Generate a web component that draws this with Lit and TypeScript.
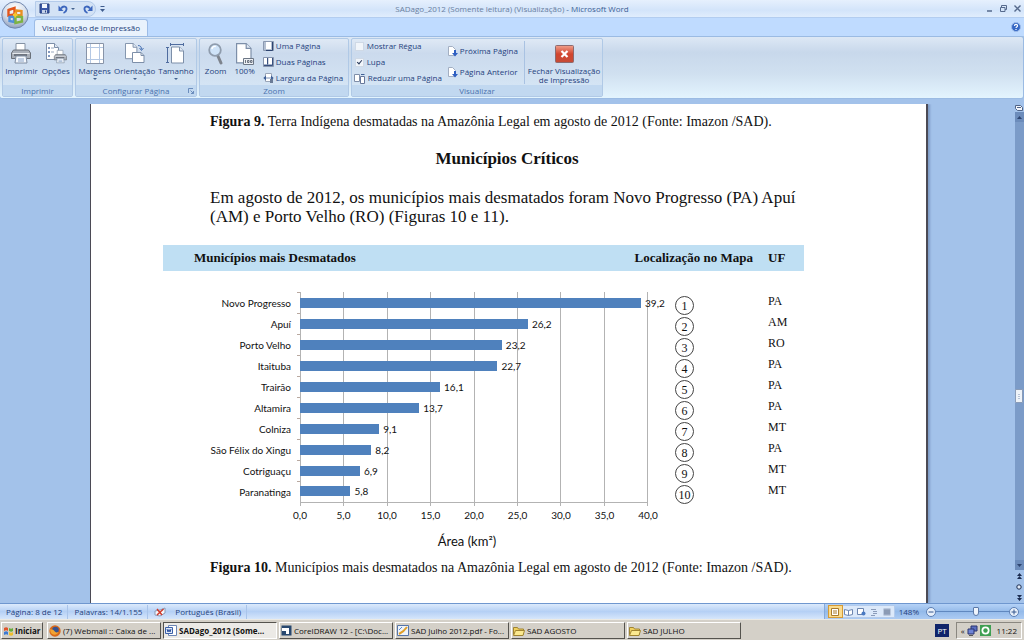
import { LitElement, html, css, svg, unsafeCSS } from "lit";
import { customElement } from "lit/decorators.js";

interface Municipio {
  nome: string;
  area: number;
  uf: string;
}

const MUNICIPIOS: Municipio[] = [
  { nome: "Novo Progresso", area: 39.2, uf: "PA" },
  { nome: "Apuí", area: 26.2, uf: "AM" },
  { nome: "Porto Velho", area: 23.2, uf: "RO" },
  { nome: "Itaituba", area: 22.7, uf: "PA" },
  { nome: "Trairão", area: 16.1, uf: "PA" },
  { nome: "Altamira", area: 13.7, uf: "PA" },
  { nome: "Colniza", area: 9.1, uf: "MT" },
  { nome: "São Félix do Xingu", area: 8.2, uf: "PA" },
  { nome: "Cotriguaçu", area: 6.9, uf: "MT" },
  { nome: "Paranatinga", area: 5.8, uf: "MT" },
];
const AXIS_MAX = 40;
const TICKS = [0, 5, 10, 15, 20, 25, 30, 35, 40];
const decimal = (n: number) => n.toFixed(1).replace(".", ",");

// One vertical hairline per tick of the horizontal axis.
const GRID = unsafeCSS(
  TICKS.map((t) => `linear-gradient(#b3b3b3, #b3b3b3) no-repeat ${(t / AXIS_MAX) * 100}% 0 / 1px 100%`).join(", ")
);

const icon = (w: number, h: number, body: unknown, box = `0 0 ${w} ${h}`) =>
  html`<svg width=${w} height=${h} viewBox=${box} aria-hidden="true">${body}</svg>`;

const sheet = svg`<path d="M.5.5h8l4 4v12h-12z" fill="#fff" stroke="#7d8fa9"/><path d="M8.500.5v4h4" fill="#dfe8f4" stroke="#7d8fa9"/>`;
const printer = svg`
  <path d="M5 8V.5h9V8" fill="#fff" stroke="#8592a4"/>
  <path d="M2.500 7h15l2 3v5.500h-19V10z" fill="#a9afb8" stroke="#6a7079"/>
  <path d="M1.500 10.500h17" stroke="#e6e9ed"/>
  <path d="M3 12h13" stroke="#5b616b" stroke-width="1.500"/>
  <path d="M5 13h10l1 7H4z" fill="#f4f8fd" stroke="#7f8da1"/>
  <path d="M7 16h6M7 18h6" stroke="#8aa3c7"/>`;

const I = {
  office: icon(28, 28, svg`
    <defs>
      <radialGradient id="orb" cx=".5" cy=".25" r=".8"><stop offset="0" stop-color="#fff"/><stop offset=".6" stop-color="#cfd8e6"/><stop offset="1" stop-color="#8494b4"/></radialGradient>
    </defs>
    <circle cx="14" cy="14" r="13.200" fill="url(#orb)" stroke="#7187ae"/>
    <g fill="none" stroke-width="2.400">
      <path d="M7.500 9l6-2v6.500l-6 1z" stroke="#e2551b"/>
      <path d="M15 9.500l5.500.5v4.500l-5.500-.5z" stroke="#e88f22"/>
      <path d="M8.500 16l4.500-.5v5.500l-4.500-1z" stroke="#4f8fd9"/>
      <path d="M14.500 15.500l6.500.5v4.500l-6.500 1.500z" stroke="#7db343"/>
    </g>
    <path d="M12 14h4.500M14.200 11.500v5" stroke="#f6c52f" stroke-width="2"/>`),
  save: icon(11, 11, svg`<path d="M1 1h9v9H1z" fill="#3b58a7" stroke="#27407f"/><path d="M3 1h5v4H3z" fill="#f3f7fd"/><path d="M3 7h5v3H3z" fill="#c4d1e8"/><path d="M6.500 7.500v2" stroke="#27407f"/>`),
  undo: icon(10, 10, svg`<path d="M3 4.500C5 1.500 9 2 8.500 5.500 8.200 7.500 7 8.500 5.500 9" fill="none" stroke="#3c66bd" stroke-width="1.800"/><path d="M.5 1.500V7H5.500z" fill="#3c66bd"/>`),
  redo: icon(10, 10, svg`<path d="M7 4.500C5 1.500 1 2 1.500 5.500 1.800 7.500 3 8.500 4.500 9" fill="none" stroke="#3c66bd" stroke-width="1.800"/><path d="M9.500 1.500V7H4.500z" fill="#3c66bd"/>`),
  caret: icon(4, 2, svg`<path d="M0 0h4L2 2z" fill="#44628f"/>`),
  qatMore: icon(5, 6, svg`<path d="M.5.5h4" stroke="#3f5c8d"/><path d="M0 3h5L2.500 6z" fill="#3f5c8d"/>`),
  help: icon(10, 10, svg`<circle cx="5" cy="5" r="4.500" fill="#3567c4" stroke="#9dbbe8"/><path d="M3.500 4c0-2 3-2 3-.3C6.500 5 5 4.800 5 6M5 7v1" fill="none" stroke="#fff" stroke-width="1.200"/>`),
  print: icon(20, 21, printer),
  options: icon(22, 21, svg`<g transform="translate(1)">${sheet}</g><path d="M3 5h2M3 9h2M3 13h2" stroke="#5a78ad" stroke-width="1.600"/><path d="M6 5h3M6 9h3" stroke="#9aa9bf"/><g transform="translate(9 7) scale(.64)">${printer}</g>`),
  margins: icon(18, 21, svg`<path d="M.5.500h17v20H.5z" fill="#fff" stroke="#8894a8"/><path d="M4.500 1v19M13.500 1v19M1 4.500h16M1 16.500h16" stroke="#b4c8e4"/>`),
  orientation: icon(20, 21, svg`<g transform="scale(.95)">${sheet}</g><path d="M7.500 9.500h8.500l3 3v7H7.500z" fill="#fff" stroke="#7d8fa9"/><path d="M16 9.500v3h3" fill="none" stroke="#7d8fa9"/><path d="M13 2.500c3 0 3.500 2 3.500 4M14.500 5l2 2.500 2-2.500" fill="none" stroke="#4b74b5"/>`),
  size: icon(19, 21, svg`<path d="M4 1.500h14M4.500 0v3M17.500 0v3M1.500 4v16M0 4.500h3M0 19.500h3" stroke="#4f6c9f"/><g transform="translate(5 3.500)">${sheet}</g>`),
  zoom: icon(16, 22, svg`<path d="M9.500 12l3.500 8" stroke="#7d838c" stroke-width="3" stroke-linecap="round"/><circle cx="7" cy="7" r="5.800" fill="#cfe3f8" stroke="#8f9cad" stroke-width="1.800"/><path d="M3.800 6a3.500 3.500 0 0 1 4-2.500" stroke="#fff" stroke-width="1.400" fill="none"/>`),
  hundred: icon(19, 22, svg`<g transform="translate(1) scale(1.200)">${sheet}</g><path d="M8.500 15.500h10v6h-10z" fill="#eef1f5" stroke="#6c7685"/><path d="M10.500 17v3M12.500 17.500h1.500v2h-1.500zM15.500 17.500h1.500v2h-1.500z" stroke="#4d5665" stroke-width=".8" fill="none"/>`),
  onePage: icon(11, 10, svg`<path d="M.5.500h10v9H.5z" fill="#b4c0d2" stroke="#8a98b0"/><path d="M3 1h5v7H3z" fill="#fff"/><path d="M9.500 1v8.500H3" fill="none" stroke="#2d4470"/>`),
  twoPages: icon(11, 10, svg`<path d="M.5.500h10v9H.5z" fill="#a4b1c7" stroke="#8795ae"/><path d="M1 1h3.500v6H1zM5.500 1H9v6H5.500z" fill="#fff"/><path d="M4.500 1v6.500M9.500 1v7.500H1" fill="none" stroke="#3a5180"/>`),
  pageWidth: icon(11, 10, svg`<path d="M2.500.500h6v8h-6z" fill="#fff" stroke="#9aa6b8"/><path d="M3 2.500L.3 5 3 7.500zM8 2.500L10.700 5 8 7.500z" fill="#3f5f95"/><path d="M3 5h5" stroke="#7b91b8"/><path d="M7 6h3v4H7z" fill="#6a7b96"/>`),
  shrink: icon(12, 11, svg`<path d="M.5 1.500h5v7h-5z" fill="#fff" stroke="#7f8ea9"/><path d="M6.500 3.500h4v7h-4z" fill="#fff" stroke="#66779a"/><path d="M7 1.500h3.500" stroke="#3f5f95"/>`),
  next: icon(10, 11, svg`<path d="M.5.500h4l3 3v6h-7z" fill="#fff" stroke="#a3afc2"/><path d="M6 4h2v3h2L7 10.500 4 7h2z" fill="#2f5fc2"/>`),
  close: icon(19, 18, svg`<defs><linearGradient id="red" x2="0" y2="1"><stop offset="0" stop-color="#f0a08c"/><stop offset=".5" stop-color="#d2452e"/><stop offset="1" stop-color="#c64c37"/></linearGradient></defs><rect x=".5" y=".5" width="18" height="17" rx="1" fill="url(#red)" stroke="#8d6a6e"/><path d="M6.500 6l6 6M12.500 6l-6 6" stroke="#fff" stroke-width="2.200"/>`),
  launcher: icon(6, 6, svg`<path d="M.5 5V.5H5" fill="none" stroke="#6b8dbd"/><path d="M2.500 2.500l3 3M5.500 3v2.500H3" stroke="#6b8dbd" fill="none"/>`),
  spell: icon(12, 10, svg`<path d="M1 4l5-1 5-2v5l-5 3-5-1z" fill="#f5f8fd" stroke="#8a9ab5"/><path d="M3 2l5 6M9.500 2L3 8" stroke="#d03a2b" stroke-width="1.500"/>`),
  flag: icon(11, 11, svg`<path d="M1 3c1.500-1 3-1 4 0v3C4 5 2.500 5 1 6z" fill="#e0532a"/><path d="M6 3c1.500 1 3 1 4 0v3C9 7 7.500 7 6 6z" fill="#66ac3a"/><path d="M1 7c1.500-1 3-1 4 0v3C4 9 2.500 9 1 10z" fill="#3c7ad2"/><path d="M6 7c1.500 1 3 1 4 0v3c-1 1-2.500 1-4 0z" fill="#efbf2d"/>`),
  firefox: icon(12, 12, svg`<circle cx="6" cy="6" r="5.700" fill="#d9691a"/><circle cx="6.500" cy="5" r="3.300" fill="#38538f"/><path d="M1 4c1 1 3 0 4 1.500S7 8 9.500 7C8 10.500 3 10.500 1.500 7z" fill="#f2a332"/>`),
  word: icon(12, 11, svg`<path d="M3.500.500h8v10h-8z" fill="#fff" stroke="#6d86b5"/><path d="M.5 2.500h7v6h-7z" fill="#dfe9f8" stroke="#3c60a8"/><path d="M2 4l1 3 1-2.500L5 7l1-3" fill="none" stroke="#2b4f9c"/>`),
  corel: icon(11, 11, svg`<path d="M.5.500h10v10H.5z" fill="#28486f"/><path d="M1 3h7v6H5V6H1z" fill="#fff"/>`),
  pdf: icon(12, 11, svg`<path d="M.5.500h11v10H.5z" fill="#eef4fb" stroke="#5675a8"/><path d="M2 9c2-1 6-4 8-7" stroke="#e0a02b" stroke-width="2" fill="none"/><path d="M2 5l3-3" stroke="#5b8bd0"/>`),
  folder: icon(12, 10, svg`<path d="M.5 8.500v-7h4l1 1.500h5v5.500z" fill="#f0d060" stroke="#a08430"/><path d="M.5 9.500L2.500 4.500h9l-1.500 5z" fill="#fbe98f" stroke="#a08430"/>`),
  net: icon(11, 11, svg`<path d="M4 1h6v5H4z" fill="#5b6fc0" stroke="#2b3570"/><path d="M1 4h6v5H1z" fill="#6f84d6" stroke="#2b3570"/><path d="M2 10.500h4" stroke="#555"/>`),
  shield: icon(11, 11, svg`<path d="M0 0h11v11H0z" fill="#3f9f52"/><circle cx="5.500" cy="5.500" r="4" fill="#fff"/><circle cx="5.500" cy="5.500" r="2.200" fill="#3f9f52"/>`),
};

@customElement("app-root")
export class AppRoot extends LitElement {
  static styles = css`
    :host {
      display: flex;
      flex-direction: column;
      height: 100vh;
      min-height: 640px;
      overflow: hidden;
      font-family: "Open Sans", "Noto Sans", sans-serif;
      font-size: 8px;
      line-height: 10px;
      color: #1f3f7d;
      background: #a3c2ea;
    }
    * { box-sizing: border-box; }
    svg { display: block; flex: none; }
    button {
      font: inherit;
      color: inherit;
      background: none;
      border: 0;
      padding: 0;
      margin: 0;
      display: flex;
      align-items: center;
      white-space: nowrap;
    }

    .top { position: relative; flex: none; }
    .orb { position: absolute; left: 1px; top: 1px; }
    .title {
      display: grid;
      grid-template-columns: 1fr auto 1fr;
      align-items: center;
      height: 18px;
      padding-left: 35px;
      padding-right: 3px;
      background: linear-gradient(#e6f0fd, #d3e4fa 60%, #e0edfd);
      border-bottom: 1px solid #b3cdf0;
    }
    .quick { display: flex; align-items: center; margin-right: 32px; }
    .qat {
      display: flex;
      align-items: center;
      gap: 8px;
      width: 61px;
      height: 16px;
      padding-left: 3px;
      border: 1px solid #b4cbea;
      border-radius: 0 8px 8px 0;
      background: #d3e2f5;
    }
    .qat .undo { gap: 3px; }
    .more { margin-left: 4px; }
    .caption { color: #3d5f95; padding-right: 32px; }
    .caption .doc { color: #6a7f9f; }
    .win { display: flex; gap: 7px; justify-content: flex-end; }

    .tabs {
      display: flex;
      align-items: flex-end;
      justify-content: space-between;
      height: 18px;
      padding: 0 3px 0 34px;
      background: #bfdbff;
    }
    .tab {
      height: 17px;
      padding: 0 7px;
      background: #e9f2fc;
      border: 1px solid #9dbce6;
      border-bottom: 0;
      border-radius: 3px 3px 0 0;
    }
    .help { padding-bottom: 4px; }

    .ribbon {
      display: flex;
      gap: 2px;
      height: 63px;
      padding: 1px 2px;
      border: 1px solid #9bbbe3;
      border-left: 0;
      border-radius: 3px;
      background: linear-gradient(#dde8f5, #c8d8eb 25%, #d0e0f0 60%, #e3f4fe);
    }
    .group {
      display: flex;
      flex-direction: column;
      border: 1px solid #b0c9e6;
      border-radius: 2px;
      background: linear-gradient(#dfe9f5, #cbdaed 25%, #d3e3f3 75%, #d8e8f8);
    }
    .print { width: 71px; }
    .setup { width: 122px; }
    .zoomg { width: 150px; }
    .view { width: 252px; }
    .body { flex: 1; min-height: 0; display: flex; justify-content: center; gap: 4px; padding-top: 2px; }
    .setup .body { gap: 3px; }
    .name {
      flex: none;
      display: flex;
      align-items: center;
      justify-content: center;
      height: 11px;
      color: #4a72ae;
      background: #c1d8f0;
    }
    .setup .name { display: grid; grid-template-columns: 1fr auto 1fr; }
    .setup .name svg { justify-self: end; margin-right: 2px; }
    .setup .name span { grid-column: 2; }
    .big { flex-direction: column; justify-content: flex-start; text-align: center; }
    .big .arrow { margin-top: 2px; }
    .art { height: 25px; display: flex; align-items: center; }
    .zoomg .body { gap: 8px; }
    .stack { display: flex; flex-direction: column; gap: 6px; }
    .stack button, .stack label { display: flex; align-items: center; gap: 2px; height: 10px; white-space: nowrap; }
    .stack.pages { gap: 11px; padding-top: 5px; }
    .view .body { gap: 6px; }
    .closer { padding-left: 3px; border-left: 1px solid #a9c2e2; height: 43px; }
    .closer .art { height: 25px; }
    .closer .lines { line-height: 9px; }
    input[type="checkbox"] {
      appearance: none;
      position: relative;
      width: 9px;
      height: 9px;
      margin: 0 1px;
      border: 1px solid #cfd9e6;
      background: #f1f5fa;
    }
    input[type="checkbox"]:checked::after {
      content: "";
      position: absolute;
      left: 2px;
      top: 0;
      width: 2px;
      height: 4px;
      border: solid #2b3b5c;
      border-width: 0 1px 1px 0;
      transform: rotate(40deg);
    }

    .work { flex: 1; min-height: 0; display: flex; padding-top: 5px; }
    .desk { flex: 1; min-width: 0; overflow: hidden; display: flex; justify-content: center; padding-left: 4px; }
    .page {
      width: 838px;
      padding: 8px 122px 0 72px;
      background: #fff;
      border: solid #4b4a55;
      border-width: 0 2px 0 1px;
      box-shadow: 2px 0 2px #7f9cc6;
      font-family: "Liberation Serif", serif;
      color: #111;
    }
    .page p, .page h1 { margin: 0 0 0 47px; white-space: nowrap; }
    .page .legend { font-size: 14px; line-height: 20px; }
    .page h1 { font-size: 17px; line-height: 20px; margin-top: 17px; text-align: center; }
    .page .text { font-size: 17px; line-height: 19px; margin-top: 19px; margin-bottom: 19px; }

    table { width: 100%; border-collapse: collapse; table-layout: fixed; font-variant-ligatures: none; }
    th, td { padding: 0; text-align: left; }
    .cname { width: 137px; }
    .cmap { width: 105px; }
    .cuf { width: 51px; }
    thead th { height: 26px; background: #bfdff3; font-size: 13px; line-height: 16px; white-space: nowrap; }
    thead .first { padding-left: 31px; }
    thead .map { text-align: right; }
    .ufcell { padding-left: 15px; font-size: 12px; line-height: 14px; padding-bottom: 4px; }
    thead .uf { padding-left: 15px; }
    tbody::before { content: ""; display: table-row; height: 21px; }
    tbody tr { height: 21px; }
    .label, .val, .scale { font: 10px/12px Lato, Carlito, sans-serif; }
    .label {
      text-align: right;
      padding-right: 9px;
      background: linear-gradient(#b9a9a0, #b9a9a0) no-repeat right top / 3px 1px;
    }
    .plot { background: ${GRID}; }
    .track { display: flex; align-items: center; height: 20px; gap: 4px; }
    .bar { flex: none; height: 10px; background: #4f81bd; }
    .mapcell { padding-left: 27px; }
    .ring {
      display: flex;
      align-items: center;
      justify-content: center;
      width: 19px;
      height: 19px;
      margin-top: 3px;
      margin-bottom: -3px;
      border: 1px solid #444;
      border-radius: 50%;
      font-size: 12px;
      line-height: 14px;
    }
    .axis { border-top: 1px solid #b3b3b3; }
    .ticks { height: 3px; background: ${GRID}; }
    .scale { display: flex; justify-content: space-between; padding-top: 3px; }
    .scale span { display: flex; justify-content: center; width: 0; }
    .unit { padding: 12px 14px 9px 0; text-align: center; font: 13px/16px Lato, Carlito, sans-serif; }

    .scroll { width: 10px; display: flex; flex-direction: column; align-items: center; gap: 1px; }
    .rail {
      flex: 1;
      width: 9px;
      display: flex;
      flex-direction: column;
      align-items: center;
      background: #7b9bc8;
    }
    .rail button { justify-content: center; width: 9px; height: 10px; background: #6c8cbb; }
    .thumb { width: 8px; height: 14px; border: 1px solid #8a9cb8; border-radius: 1px; background: repeating-linear-gradient(#f3f6fa 0 1px, #b5c2d6 1px 2px) content-box, #eef3f9; padding: 3px 2px; }
    .before { flex: 264; }
    .after { flex: 155; }
    .nav { height: 10px; }

    .status {
      flex: none;
      display: flex;
      align-items: center;
      height: 16px;
      padding-left: 6px;
      border-top: 1px solid #6f97cf;
      background: linear-gradient(#dceafc, #bdd5f6 40%, #b5d0f5 50%, #d6e6fb);
    }
    .seg { padding-right: 5px; margin-right: 6px; border-right: 1px solid #a9c4ea; display: flex; align-items: center; height: 14px; gap: 9px; }
    .tools { margin-left: auto; align-self: stretch; display: flex; align-items: center; gap: 4px; padding: 0 5px 0 3px; background: linear-gradient(#b5d2f7, #94bae9 50%, #accbf3); border-left: 1px solid #86a9d9; }
    .modes { display: flex; width: 67px; height: 13px; background: #dce9fa; border: 1px solid #b3cbec; }
    .modes button { flex: 1; justify-content: center; }
    .modes .on { background: #fbdc8e; outline: 1px solid #d69b36; }
    .zoomer { display: flex; align-items: center; margin-left: 3px; }
    input[type="range"] { appearance: none; width: 73px; height: 12px; margin: 0; background: linear-gradient(#6088bf, #6088bf) no-repeat center / 100% 1px; }
    input[type="range"]::-webkit-slider-thumb { appearance: none; width: 6px; height: 9px; border: 1px solid #5b79a8; border-radius: 1px 1px 3px 3px; background: #eef4fc; }

    .taskbar {
      flex: none;
      display: flex;
      align-items: center;
      gap: 2px;
      height: 21px;
      padding: 1px 2px 0 1px;
      color: #111;
      background: #d4d0c8;
      border-top: 1px solid #eceae4;
    }
    .task, .start {
      gap: 2px;
      height: 17px;
      padding: 0 1px;
      border: 1px solid;
      border-color: #fff #55534e #55534e #fff;
      background: #d4d0c8;
    }
    .task { width: 114px; }
    .start { width: 42px; gap: 1px; margin-right: 2px; }
    .start, .active { font-weight: 700; }
    .active { background: #eceae6; border-color: #55534e #fff #fff #55534e; }
    .lang { margin-left: auto; margin-right: 5px; padding: 1px 2px; line-height: 11px; background: #10246a; color: #fff; }
    .tray { display: flex; align-items: center; gap: 2px; height: 17px; padding: 0 4px; border: 1px solid; border-color: #8a8780 #fff #fff #8a8780; }
    .tray .clock { padding-left: 4px; }
  `;

  private big(art: unknown, text: unknown, arrow = false) {
    return html`<button class="big"><span class="art">${art}</span><span>${text}</span>${arrow
      ? html`<span class="arrow">${I.caret}</span>`
      : ""}</button>`;
  }

  private ribbon() {
    return html`<div class="ribbon">
      <section class="group print">
        <div class="body">${this.big(I.print, "Imprimir")}${this.big(I.options, "Opções")}</div>
        <div class="name">Imprimir</div>
      </section>
      <section class="group setup">
        <div class="body">
          ${this.big(I.margins, "Margens", true)}${this.big(I.orientation, "Orientação", true)}${this.big(I.size, "Tamanho", true)}
        </div>
        <div class="name"><span>Configurar Página</span>${I.launcher}</div>
      </section>
      <section class="group zoomg">
        <div class="body">
          ${this.big(I.zoom, "Zoom")}${this.big(I.hundred, "100%")}
          <div class="stack">
            <button>${I.onePage}Uma Página</button>
            <button>${I.twoPages}Duas Páginas</button>
            <button>${I.pageWidth}Largura da Página</button>
          </div>
        </div>
        <div class="name">Zoom</div>
      </section>
      <section class="group view">
        <div class="body">
          <div class="stack">
            <label><input type="checkbox" />Mostrar Régua</label>
            <label><input type="checkbox" checked />Lupa</label>
            <button>${I.shrink}Reduzir uma Página</button>
          </div>
          <div class="stack pages">
            <button>${I.next}Próxima Página</button>
            <button>${I.next}Página Anterior</button>
          </div>
          <button class="big closer">
            <span class="art">${I.close}</span><span class="lines">Fechar Visualização<br />de Impressão</span>
          </button>
        </div>
        <div class="name">Visualizar</div>
      </section>
    </div>`;
  }

  private chart() {
    return html`<table>
      <colgroup><col class="cname" /><col /><col class="cmap" /><col class="cuf" /></colgroup>
      <thead>
        <tr>
          <th class="first">Municípios mais Desmatados</th>
          <th class="map" colspan="2">Localização no Mapa</th>
          <th class="uf">UF</th>
        </tr>
      </thead>
      <tbody>
        ${MUNICIPIOS.map(
          (m, i) => html`<tr>
            <th class="label" scope="row">${m.nome}</th>
            <td class="plot">
              <div class="track">
                <div class="bar" style="width:${(m.area / AXIS_MAX) * 100}%"></div>
                <span class="val">${decimal(m.area)}</span>
              </div>
            </td>
            <td class="mapcell"><span class="ring">${i + 1}</span></td>
            <td class="ufcell">${m.uf}</td>
          </tr>`
        )}
      </tbody>
      <tfoot>
        <tr>
          <td></td>
          <td class="axis">
            <div class="ticks"></div>
            <div class="scale">${TICKS.map((t) => html`<span>${decimal(t)}</span>`)}</div>
            <div class="unit">Área (km²)</div>
          </td>
          <td colspan="2"></td>
        </tr>
      </tfoot>
    </table>`;
  }

  render() {
    return html`
      <header class="top">
        <div class="title">
          <div class="quick">
            <div class="qat">
              <button aria-label="Salvar">${I.save}</button>
              <button class="undo" aria-label="Desfazer">${I.undo}${I.caret}</button>
              <button aria-label="Refazer">${I.redo}</button>
            </div>
            <button class="more" aria-label="Personalizar">${I.qatMore}</button>
          </div>
          <div class="caption"><span class="doc">SADago_2012 (Somente leitura) (Visualização)</span> - Microsoft Word</div>
          <div class="win">
            <button aria-label="Minimizar">${icon(6, 7, svg`<path d="M0 6h5" stroke="#566a8c" stroke-width="1.500"/>`)}</button>
            <button aria-label="Restaurar">${icon(7, 7, svg`<path d="M1.500 3V.5h5v4H5M.5 2.500h4.500v4H.5z" fill="none" stroke="#566a8c"/>`)}</button>
            <button aria-label="Fechar">${icon(7, 7, svg`<path d="M.5.500l6 6M6.500.500l-6 6" stroke="#566a8c" stroke-width="1.400"/>`)}</button>
          </div>
        </div>
        <nav class="tabs">
          <button class="tab">Visualização de Impressão</button>
          <button class="help" aria-label="Ajuda">${I.help}</button>
        </nav>
        ${this.ribbon()}
        <button class="orb" aria-label="Botão Office">${I.office}</button>
      </header>

      <main class="work">
        <div class="desk">
          <article class="page">
            <p class="legend"><b>Figura 9.</b> Terra Indígena desmatadas na Amazônia Legal em agosto de 2012 (Fonte: Imazon /SAD).</p>
            <h1>Municípios Críticos</h1>
            <p class="text">Em agosto de 2012, os municípios mais desmatados foram Novo Progresso (PA) Apuí<br />(AM) e Porto Velho (RO) (Figuras 10 e 11).</p>
            ${this.chart()}
            <p class="legend"><b>Figura 10.</b> Municípios mais desmatados na Amazônia Legal em agosto de 2012 (Fonte: Imazon /SAD).</p>
          </article>
        </div>
        <div class="scroll">
          <button aria-label="Régua">${icon(8, 7, svg`<path d="M.5 1.500h5l2 2v3h-5l-2-2z" fill="#f3f6fb" stroke="#4f6387"/><path d="M2 3.500h4" stroke="#4f6387"/>`)}</button>
          <div class="rail">
            <button aria-label="Acima">${icon(5, 3, svg`<path d="M0 3h5L2.500 0z" fill="#2d4470"/>`)}</button>
            <div class="before"></div>
            <div class="thumb"></div>
            <div class="after"></div>
            <button aria-label="Abaixo">${icon(5, 3, svg`<path d="M0 0h5L2.500 3z" fill="#2d4470"/>`)}</button>
          </div>
          <button class="nav" aria-label="Página acima">${icon(5, 6, svg`<path d="M0 3h5L2.500 0zM0 6h5L2.500 3z" fill="#1b2c50"/>`)}</button>
          <button class="nav" aria-label="Procurar">${icon(6, 6, svg`<circle cx="3" cy="3" r="2.200" fill="#dfe9f8" stroke="#1b2c50"/>`)}</button>
          <button class="nav" aria-label="Página abaixo">${icon(5, 6, svg`<path d="M0 0h5L2.500 3zM0 3h5L2.500 6z" fill="#1b2c50"/>`)}</button>
        </div>
      </main>

      <footer class="status">
        <span class="seg">Página: 8 de 12</span>
        <span class="seg">Palavras: 14/1.155</span>
        <span class="seg">${I.spell}Português (Brasil)</span>
        <div class="tools">
          <div class="modes">
            <button class="on" aria-label="Layout">${icon(8, 8, svg`<path d="M.5.500h7v7h-7z" fill="#fff" stroke="#a97a2c"/><path d="M2 3h4M2 5h4" stroke="#a97a2c"/>`)}</button>
            <button aria-label="Leitura">${icon(9, 8, svg`<path d="M.5 1.500l4 1 4-1v5l-4 1-4-1zM4.500 2.500v5" fill="#fff" stroke="#6d86b0"/>`)}</button>
            <button aria-label="Web">${icon(9, 8, svg`<path d="M.5.500h6v6h-6z" fill="#fff" stroke="#6d86b0"/><circle cx="6.500" cy="5.500" r="2" fill="#4a7ac2"/>`)}</button>
            <button aria-label="Tópicos">${icon(8, 8, svg`<path d="M1 1.500h5M3 3.500h4M3 5.500h4M1 7.500h4" stroke="#8b9cba"/>`)}</button>
            <button aria-label="Rascunho">${icon(8, 8, svg`<path d="M.5.500h7v7h-7z" fill="#9aa9c2"/><path d="M1 3h6M1 5h6" stroke="#7d8ca7"/>`)}</button>
          </div>
          <span>148%</span>
          <div class="zoomer">
            <button aria-label="Menos zoom">${icon(10, 10, svg`<circle cx="5" cy="5" r="4.500" fill="#e9f1fb" stroke="#5b7db2"/><path d="M2.500 5h5" stroke="#34568e"/>`)}</button>
            <input type="range" aria-label="Zoom" min="0" max="100" value="55" />
            <button aria-label="Mais zoom">${icon(10, 10, svg`<circle cx="5" cy="5" r="4.500" fill="#e9f1fb" stroke="#5b7db2"/><path d="M2.500 5h5M5 2.500v5" stroke="#34568e"/>`)}</button>
          </div>
        </div>
      </footer>

      <footer class="taskbar">
        <button class="start">${I.flag}Iniciar</button>
        <button class="task">${I.firefox}(7) Webmail :: Caixa de ...</button>
        <button class="task active">${I.word}SADago_2012 (Some...</button>
        <button class="task">${I.corel}CorelDRAW 12 - [C:\\Doc...</button>
        <button class="task">${I.pdf}SAD Julho 2012.pdf - Fo...</button>
        <button class="task">${I.folder}SAD AGOSTO</button>
        <button class="task">${I.folder}SAD JULHO</button>
        <span class="lang">PT</span>
        <div class="tray"><span>«</span>${I.net}${I.shield}<span class="clock">11:22</span></div>
      </footer>
    `;
  }
}
